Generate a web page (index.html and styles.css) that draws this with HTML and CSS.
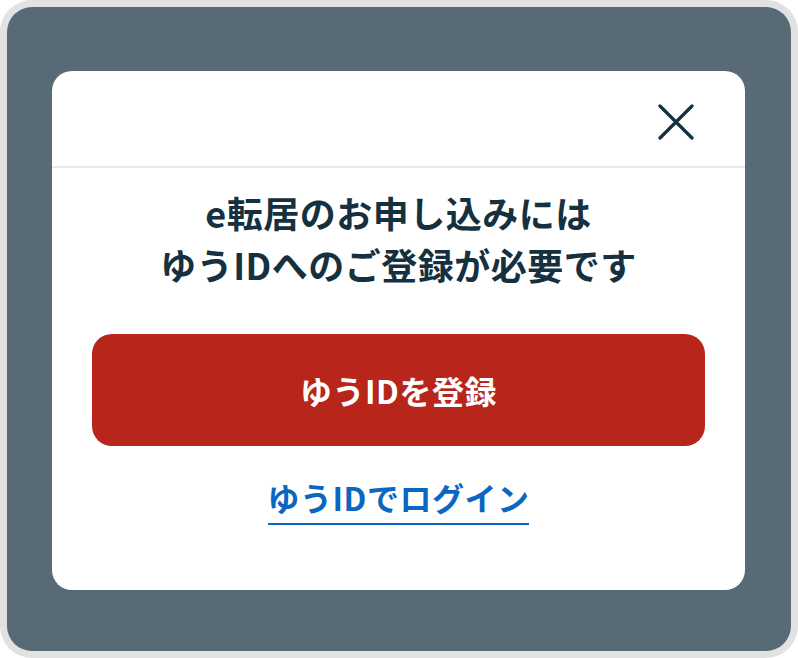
FILE: index.html
```html
<!DOCTYPE html>
<html lang="ja">
<head>
<meta charset="utf-8">
<title>ゆうID</title>
<link rel="stylesheet" href="styles.css">
</head>
<body>
<div class="frame">
  <div class="overlay">
    <div class="modal">
      <div class="modal-header">
        <button class="close" aria-label="閉じる">
          <svg viewBox="0 0 36 36" width="36" height="36">
            <path d="M2 2 L34 34 M34 2 L2 34" stroke="#14303f" stroke-width="3.2" stroke-linecap="round" fill="none"/>
          </svg>
        </button>
      </div>
      <div class="modal-body">
        <p class="title">e転居のお申し込みには<br>ゆうIDへのご登録が必要です</p>
        <a class="btn-primary" href="#">ゆうIDを登録</a>
        <a class="link" href="#">ゆうIDでログイン</a>
      </div>
    </div>
  </div>
</div>
</body>
</html>
```

FILE: styles.css
```css
* { box-sizing: border-box; }
html, body { margin: 0; padding: 0; background: #ffffff; }
body {
  font-family: "Noto Sans CJK JP", "Noto Sans", sans-serif;
}
.frame {
  width: 798px;
  height: 658px;
  background: #e2e2e2;
  border-radius: 32px;
  padding: 7px;
}
.overlay {
  width: 100%;
  height: 100%;
  background: #586a75;
  border-radius: 25px;
  padding: 64px 46px 61px 45px;
}
.modal {
  width: 693px;
  height: 519px;
  background: #ffffff;
  border-radius: 20px;
  display: flex;
  flex-direction: column;
}
.modal-header {
  display: flex;
  justify-content: flex-end;
  padding: 33px 51px 26px 0;
  border-bottom: 2px solid #e6e8ea;
}
.close {
  width: 36px;
  height: 36px;
  padding: 0;
  border: 0;
  background: none;
  display: block;
}
.close svg { display: block; }
.modal-body {
  display: flex;
  flex-direction: column;
  align-items: center;
  padding: 18px 40px 0;
}
.title {
  margin: 0;
  font-size: 36px;
  line-height: 52px;
  font-weight: 700;
  letter-spacing: 0.5px;
  color: #15303f;
  text-align: center;
}
.btn-primary {
  margin-top: 44px;
  width: 100%;
  height: 112px;
  background: #b8261b;
  border-radius: 20px;
  color: #ffffff;
  font-size: 32px;
  font-weight: 700;
  letter-spacing: 0.5px;
  text-decoration: none;
  display: flex;
  align-items: center;
  justify-content: center;
}
.link {
  margin-top: 31px;
  font-size: 32px;
  line-height: 40px;
  font-weight: 700;
  letter-spacing: 0.5px;
  color: #0b66c1;
  text-decoration: none;
  padding-bottom: 6px;
  border-bottom: 2px solid #0b66c1;
}
```
